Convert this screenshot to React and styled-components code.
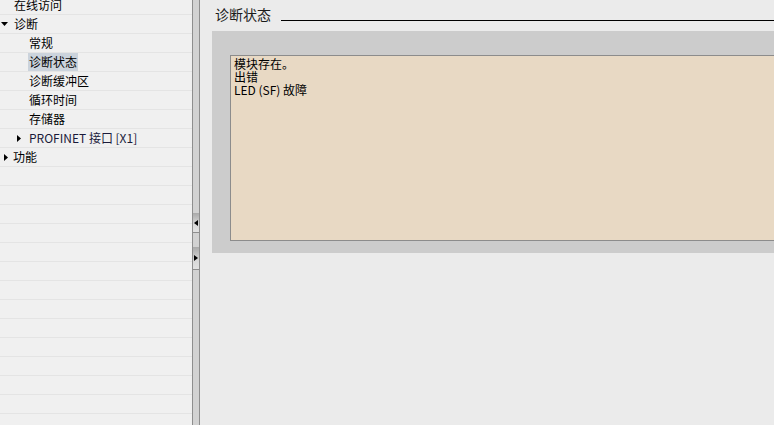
import React from 'react'
import styled, { createGlobalStyle } from 'styled-components'

const Global = createGlobalStyle`
html, body { margin:0; padding:0; }
body {
  font-family: "Noto Sans", "Noto Sans CJK SC", sans-serif;
  font-size:12px;
  color:#000;
  overflow:hidden;
}
`

const Page = styled.div`
display:flex;
width:774px;
height:425px;
overflow:hidden;
background:#ebebeb;
`

const Sidebar = styled.div`
width:192px;
flex-shrink:0;
background:#f0f0f0;
overflow:hidden;
`

const Tree = styled.div`
margin-top:-4px;
`

const Row = styled.div`
height:18px;
border-bottom:1px solid #e4e4e4;
display:flex;
align-items:center;
padding-left:${p => p.indent}px;
font-family:"Noto Sans CJK SC", sans-serif;
font-size:12px;
line-height:18px;
white-space:nowrap;
`

const Toggle = styled.span`
width:${p => p.w}px;
display:flex;
align-items:center;
flex-shrink:0;
`

const Label = styled.span`
padding:0 1px;
height:18px;
background:${p => (p.selected ? '#cbd3dc' : 'transparent')};
color:${p => p.color || '#000'};
`

const Splitter = styled.div`
width:8px;
flex-shrink:0;
background:#d2d2d2;
border-left:1px solid #8e8e8e;
border-right:1px solid #8e8e8e;
box-sizing:border-box;
display:flex;
flex-direction:column;
padding-top:213px;
`

const SplitBtn = styled.div`
height:${p => p.h}px;
margin-bottom:${p => p.gap}px;
background:linear-gradient(#a9a9a9, #d8d8d8 60%, #e2e2e2);
border-bottom:1px solid #8e8e8e;
display:flex;
align-items:center;
justify-content:center;
`

const Main = styled.div`
flex:1;
overflow:hidden;
display:flex;
flex-direction:column;
`

const TitleRow = styled.div`
display:flex;
align-items:flex-end;
margin:6px 0 0 15px;
height:16px;
`

const Title = styled.span`
font-family:"Noto Sans CJK SC", sans-serif;
font-size:14px;
line-height:16px;
color:#1a1a1a;
`

const TitleLine = styled.div`
flex:1;
height:1px;
background:#000;
margin:0 0 1px 10px;
`

const Group = styled.div`
margin:9px 0 0 12px;
height:222px;
background:#cccccc;
box-sizing:border-box;
padding:24px 0 12px 18px;
display:flex;
`

const Status = styled.div`
flex:1;
margin-right:-20px;
background:#e8d9c4;
border:1px solid #8c8c8c;
padding:1px 3px;
font-family:"Noto Sans CJK SC", sans-serif;
font-size:12px;
line-height:13px;
color:#000;
`

const Line = styled.div``

const Arrow = ({ dir }) => {
  const pts = {
    down: '0,0 7,0 3.5,4',
    right: '0,0 4,3.5 0,7',
    left: '4,0 0,3 4,6',
    rightSm: '0,0 4,3 0,6',
  }
  const size = dir === 'down' ? [7, 4] : dir === 'right' ? [4, 7] : [4, 6]
  return (
    <svg width={size[0]} height={size[1]} viewBox={`0 0 ${size[0]} ${size[1]}`}>
      <polygon points={pts[dir]} fill="#000" />
    </svg>
  )
}

const items = [
  { text: '在线访问', indent: 13 },
  { text: '诊断', indent: 1, toggle: 'down', tw: 12 },
  { text: '常规', indent: 28 },
  { text: '诊断状态', indent: 28, selected: true },
  { text: '诊断缓冲区', indent: 28 },
  { text: '循环时间', indent: 28 },
  { text: '存储器', indent: 28 },
  { text: 'PROFINET 接口 [X1]', indent: 17, toggle: 'right', tw: 11, color: '#1a1a3a' },
  { text: '功能', indent: 4, toggle: 'right', tw: 8 },
]

const App = () => {
  const blanks = Array.from({ length: 14 })
  return (
    <>
      <Global />
      <Page>
        <Sidebar>
          <Tree>
            {items.map((it, i) => (
              <Row key={i} indent={it.indent}>
                {it.toggle && (
                  <Toggle w={it.tw}>
                    <Arrow dir={it.toggle} />
                  </Toggle>
                )}
                <Label selected={it.selected} color={it.color}>{it.text}</Label>
              </Row>
            ))}
            {blanks.map((_, i) => (
              <Row key={'b' + i} indent={0} />
            ))}
          </Tree>
        </Sidebar>
        <Splitter>
          <SplitBtn h={19} gap={14}>
            <Arrow dir="left" />
          </SplitBtn>
          <SplitBtn h={22} gap={0}>
            <Arrow dir="rightSm" />
          </SplitBtn>
        </Splitter>
        <Main>
          <TitleRow>
            <Title>诊断状态</Title>
            <TitleLine />
          </TitleRow>
          <Group>
            <Status>
              <Line>模块存在。</Line>
              <Line>出错</Line>
              <Line>LED (SF) 故障</Line>
            </Status>
          </Group>
        </Main>
      </Page>
    </>
  )
}

export default App
